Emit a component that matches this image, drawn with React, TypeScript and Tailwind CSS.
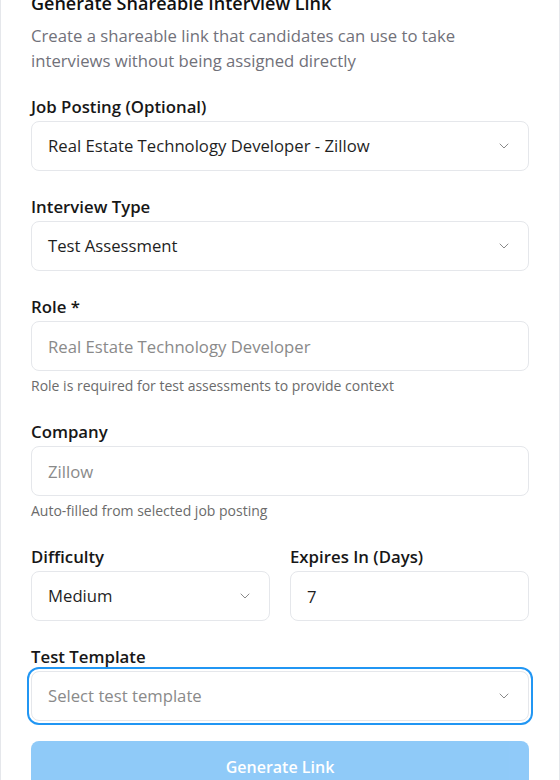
import React from 'react';
import { ChevronDown } from 'lucide-react';

function Label({ children }: { children: React.ReactNode }) {
  return <label className="block text-[16.8px] leading-6 font-semibold text-[#171717] mb-0.5">{children}</label>;
}

function SelectBox({ value, placeholder, focused }: { value?: string; placeholder?: string; focused?: boolean }) {
  return (
    <div
      className={
        'flex items-center justify-between h-[50px] px-4 rounded-lg border border-[#e5e7eb] bg-white text-[16.7px] ' +
        (focused ? 'ring-2 ring-[#2196f3] ring-offset-2' : '')
      }
    >
      <span className={value ? 'text-[#1f1f1f]' : 'text-[#8a8a8a]'}>{value || placeholder}</span>
      <ChevronDown size={16} strokeWidth={1.5} className="text-[#8a8a8a]" />
    </div>
  );
}

function TextBox({ value, placeholder }: { value?: string; placeholder?: string }) {
  return (
    <input
      readOnly
      value={value}
      placeholder={placeholder}
      className="w-full h-[50px] px-4 rounded-lg border border-[#e5e7eb] bg-white text-[16.7px] text-[#1f1f1f] placeholder:text-[#8a8a8a] outline-none"
    />
  );
}

function Helper({ children }: { children: React.ReactNode }) {
  return <p className="mt-[5px] text-sm leading-5 text-[#6b6b6b]">{children}</p>;
}

export default function App() {
  return (
    <div className="min-h-screen bg-white border-x border-[#e5e7eb] font-['Segoe_UI','Open_Sans',sans-serif] overflow-hidden">
      <div className="px-[30px] -mt-[11px]">
        <h2 className="text-lg leading-7 font-semibold text-[#111111]">Generate Shareable Interview Link</h2>
        <p className="mt-1.5 text-[16.7px] leading-[25px] text-[#71717a]">
          Create a shareable link that candidates can use to take interviews without being assigned directly
        </p>

        <div className="mt-[22px] flex flex-col gap-6">
          <div>
            <Label>Job Posting (Optional)</Label>
            <SelectBox value="Real Estate Technology Developer - Zillow" />
          </div>

          <div>
            <Label>Interview Type</Label>
            <SelectBox value="Test Assessment" />
          </div>

          <div>
            <Label>Role *</Label>
            <TextBox placeholder="Real Estate Technology Developer" />
            <Helper>Role is required for test assessments to provide context</Helper>
          </div>

          <div>
            <Label>Company</Label>
            <TextBox placeholder="Zillow" />
            <Helper>Auto-filled from selected job posting</Helper>
          </div>

          <div className="grid grid-cols-2 gap-5">
            <div>
              <Label>Difficulty</Label>
              <SelectBox value="Medium" />
            </div>
            <div>
              <Label>Expires In (Days)</Label>
              <TextBox value="7" />
            </div>
          </div>

          <div>
            <Label>Test Template</Label>
            <SelectBox placeholder="Select test template" focused />
          </div>
        </div>

        <button
          disabled
          className="mt-5 w-full h-[52px] rounded-lg bg-[#2196f3] opacity-50 text-white font-semibold text-base"
        >
          Generate Link
        </button>
      </div>
    </div>
  );
}
